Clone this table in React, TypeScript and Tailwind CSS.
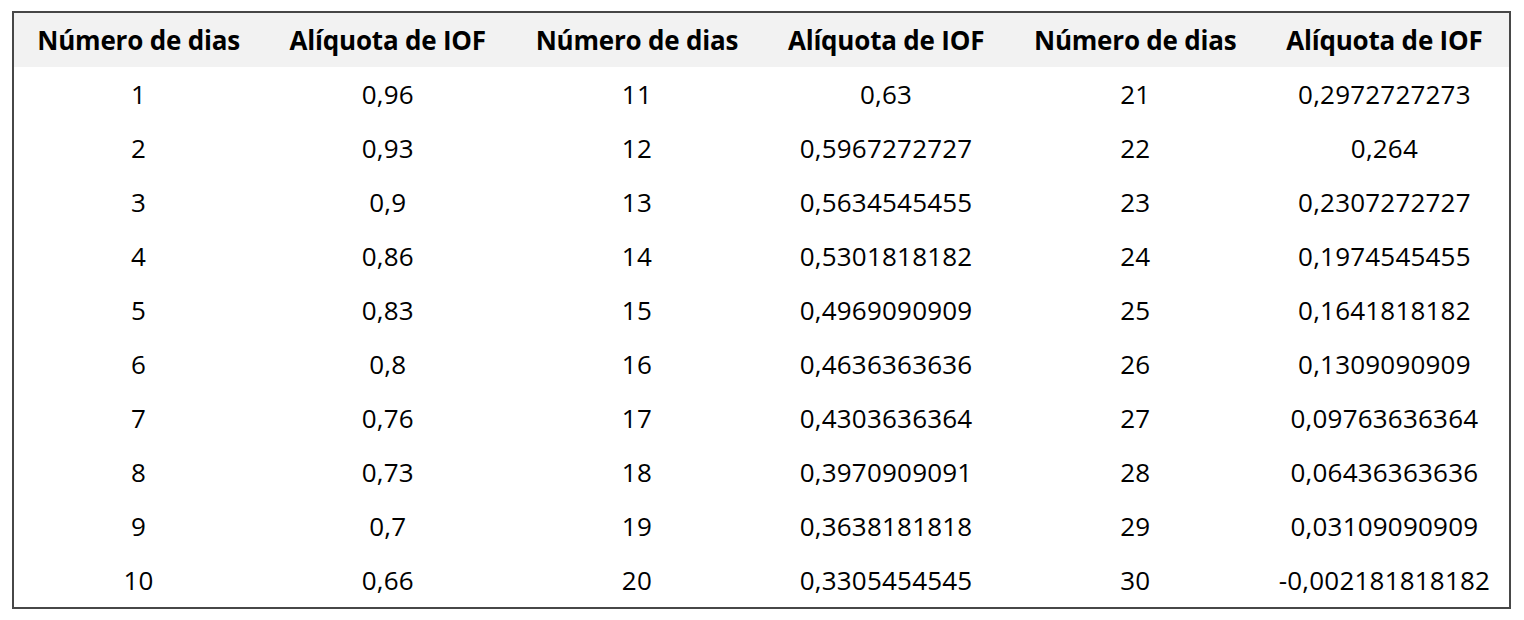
const rows: [string, string, string, string, string, string][] = [
  ["1", "0,96", "11", "0,63", "21", "0,2972727273"],
  ["2", "0,93", "12", "0,5967272727", "22", "0,264"],
  ["3", "0,9", "13", "0,5634545455", "23", "0,2307272727"],
  ["4", "0,86", "14", "0,5301818182", "24", "0,1974545455"],
  ["5", "0,83", "15", "0,4969090909", "25", "0,1641818182"],
  ["6", "0,8", "16", "0,4636363636", "26", "0,1309090909"],
  ["7", "0,76", "17", "0,4303636364", "27", "0,09763636364"],
  ["8", "0,73", "18", "0,3970909091", "28", "0,06436363636"],
  ["9", "0,7", "19", "0,3638181818", "29", "0,03109090909"],
  ["10", "0,66", "20", "0,3305454545", "30", "-0,002181818182"],
]

const headers = [
  "Número de dias",
  "Alíquota de IOF",
  "Número de dias",
  "Alíquota de IOF",
  "Número de dias",
  "Alíquota de IOF",
]

export default function App() {
  return (
    <div className="w-[1524px] h-[620px] bg-white pl-[12px] pt-[11px] font-['Open_Sans',sans-serif] text-black">
      <div className="w-[1499px] border-2 border-[#474747]">
        {/* header */}
        <div className="grid grid-cols-6 h-[54px] bg-[#f2f2f2] items-center">
          {headers.map((h, i) => (
            <div key={i} className="text-center text-[26px] font-bold tracking-[-0.2px] whitespace-nowrap">
              {h}
            </div>
          ))}
        </div>

        {/* body */}
        {rows.map((r, ri) => (
          <div key={ri} className="grid grid-cols-6 h-[54px] items-center">
            {r.map((c, ci) => (
              <div key={ci} className="text-center text-[26px] tracking-[0.2px] whitespace-nowrap">
                {c}
              </div>
            ))}
          </div>
        ))}
      </div>
    </div>
  )
}
